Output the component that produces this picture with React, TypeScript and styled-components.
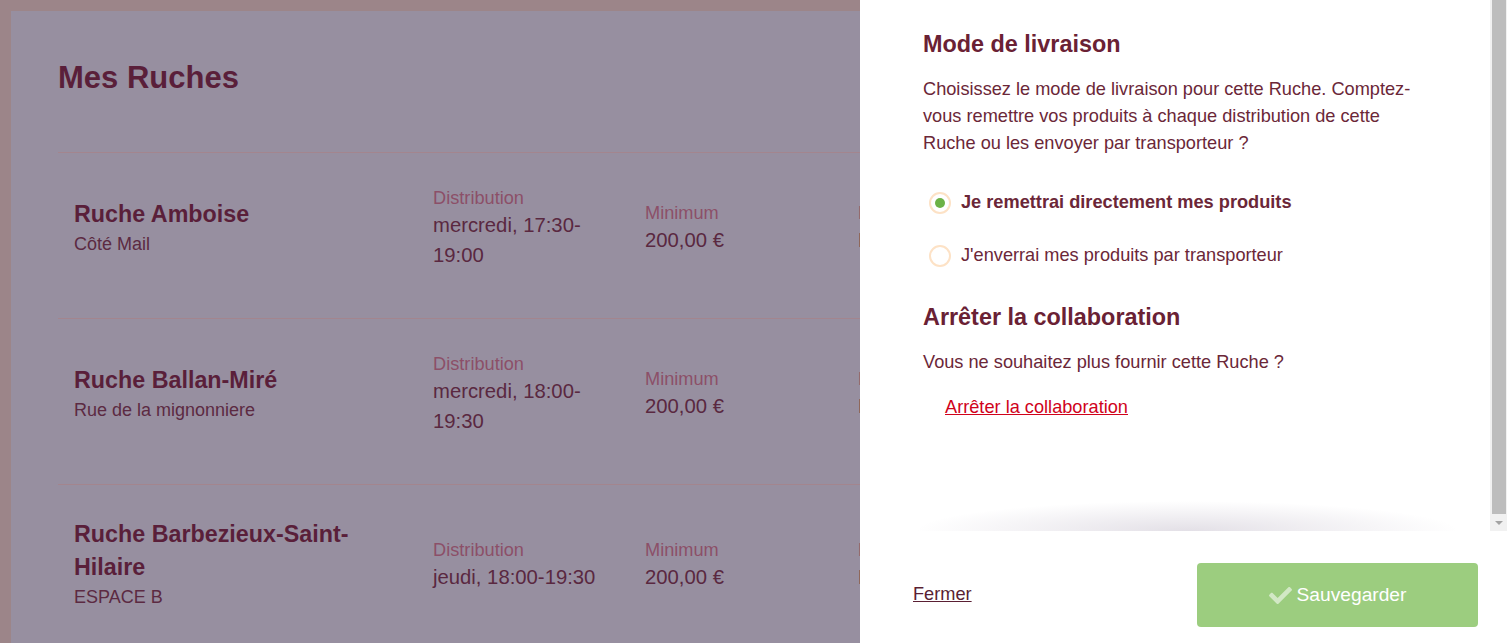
import React from "react"
import styled, { createGlobalStyle } from "styled-components"
import { FaCheck } from "react-icons/fa"

const GlobalStyle = createGlobalStyle`
  html, body {
    margin: 0;
    padding: 0;
    height: 100%;
    overflow: hidden;
  }
  body {
    background: #9c8589;
    font-family: "Liberation Sans", Arial, sans-serif;
  }
`

const ruches = [
  {
    name: "Ruche Amboise",
    place: "Côté Mail",
    distribution: "mercredi, 17:30-19:00",
    minimum: "200,00 €",
  },
  {
    name: "Ruche Ballan-Miré",
    place: "Rue de la mignonniere",
    distribution: "mercredi, 18:00-19:30",
    minimum: "200,00 €",
  },
  {
    name: "Ruche Barbezieux-Saint-Hilaire",
    place: "ESPACE B",
    distribution: "jeudi, 18:00-19:30",
    minimum: "200,00 €",
  },
]

const Page = styled.div`
  padding: 11px 11px 0;
  height: 100vh;
  box-sizing: border-box;
  overflow: hidden;
`

const Card = styled.section`
  background: #978fa0;
  padding: 49px 47px 0;
  min-height: 100%;
  box-sizing: border-box;
`

const Title = styled.h1`
  margin: 0 0 56px;
  font-size: 31px;
  line-height: 36px;
  font-weight: 700;
  color: #5a1f3a;
`

const Row = styled.div`
  display: grid;
  grid-template-columns: 359px 212px 213px 1fr;
  align-items: center;
  border-top: 1px solid #a3858e;
  padding: 33px 0 48px 16px;
`

const NameCol = styled.div`
  padding-right: 40px;
`

const Name = styled.div`
  font-size: 23.3px;
  line-height: 33px;
  font-weight: 700;
  color: #5a1f3a;
`

const Place = styled.div`
  font-size: 18px;
  line-height: 27px;
  color: #5c2a42;
`

const InfoCol = styled.div`
  padding-right: 28px;
`

const Label = styled.div`
  font-size: 18.2px;
  line-height: 24px;
  color: #8c4f68;
`

const Value = styled.div`
  font-size: 20.3px;
  line-height: 30px;
  color: #5a2840;
`

const Drawer = styled.aside`
  position: fixed;
  top: 0;
  right: 0;
  bottom: 0;
  width: 649px;
  background: #fff;
  display: flex;
  flex-direction: column;
`

const ScrollArea = styled.div`
  position: relative;
  height: 531px;
  display: flex;
  &::after {
    content: "";
    position: absolute;
    left: 55px;
    right: 50px;
    bottom: 0;
    height: 30px;
    background: radial-gradient(
      ellipse 50% 100% at 50% 100%,
      rgba(90, 70, 110, 0.17),
      rgba(90, 70, 110, 0) 100%
    );
    pointer-events: none;
  }
`

const Content = styled.div`
  flex: 1;
  padding: 29px 0 0 63px;
  color: #6b2738;
`

const Heading = styled.h2`
  margin: 0;
  font-size: 23.4px;
  line-height: 30px;
  font-weight: 700;
  color: #6a2134;
`

const Text = styled.p`
  margin: 17px 0 0;
  max-width: 500px;
  font-size: 18.2px;
  line-height: 27px;
`

const Options = styled.div`
  display: flex;
  flex-direction: column;
  gap: 26px;
  margin: 32px 0 33px 6px;
`

const Option = styled.label<{ $checked?: boolean }>`
  display: flex;
  align-items: center;
  gap: 10px;
  font-size: 18.2px;
  line-height: 27px;
  font-weight: ${p => (p.$checked ? 700 : 400)};
  color: #6b2738;
`

const Radio = styled.span<{ $checked?: boolean }>`
  width: 22px;
  height: 22px;
  box-sizing: border-box;
  border-radius: 50%;
  border: 2px solid #fde2c6;
  display: flex;
  align-items: center;
  justify-content: center;
  &::before {
    content: "";
    width: 10px;
    height: 10px;
    border-radius: 50%;
    background: ${p => (p.$checked ? "#6cb247" : "transparent")};
  }
`

const StopLink = styled.a`
  display: inline-block;
  margin: 18px 0 0 22px;
  font-size: 18.2px;
  line-height: 27px;
  color: #d0021b;
  text-decoration: underline;
`

const Scrollbar = styled.div`
  width: 17px;
  margin-right: 2px;
  background: #f1f1f1;
  display: flex;
  flex-direction: column;
`

const Thumb = styled.div`
  flex: 1;
  margin: 0 1px 0 2px;
  background: #bdbdbd;
`

const ArrowDown = styled.div`
  height: 17px;
  display: flex;
  align-items: center;
  justify-content: center;
  &::before {
    content: "";
    border-left: 4px solid transparent;
    border-right: 4px solid transparent;
    border-top: 4px solid #a3a3a3;
  }
`

const Footer = styled.footer`
  flex: 1;
  display: flex;
  align-items: center;
  justify-content: space-between;
  padding: 32px 31px 16px 53px;
`

const CloseLink = styled.a`
  margin-top: -2px;
  font-size: 18.2px;
  line-height: 27px;
  color: #5a1f33;
  text-decoration: underline;
`

const SaveButton = styled.button`
  width: 281px;
  height: 64px;
  border: none;
  border-radius: 4px;
  background: #9ccd7f;
  color: #fff;
  font-family: inherit;
  font-size: 19.2px;
  display: flex;
  align-items: center;
  justify-content: center;
  gap: 5px;
  svg {
    color: rgba(255, 255, 255, 0.55);
    font-size: 23px;
  }
`

export default function App() {
  return (
    <>
      <GlobalStyle />
      <Page>
        <Card>
          <Title>Mes Ruches</Title>
          {ruches.map(r => (
            <Row key={r.name}>
              <NameCol>
                <Name>{r.name}</Name>
                <Place>{r.place}</Place>
              </NameCol>
              <InfoCol>
                <Label>Distribution</Label>
                <Value>{r.distribution}</Value>
              </InfoCol>
              <InfoCol>
                <Label>Minimum</Label>
                <Value>{r.minimum}</Value>
              </InfoCol>
              <InfoCol>
                <Label>Livraison</Label>
                <Value>Directe</Value>
              </InfoCol>
            </Row>
          ))}
        </Card>
      </Page>

      <Drawer>
        <ScrollArea>
          <Content>
            <Heading>Mode de livraison</Heading>
            <Text>
              Choisissez le mode de livraison pour cette Ruche. Comptez-vous
              remettre vos produits à chaque distribution de cette Ruche ou les
              envoyer par transporteur ?
            </Text>
            <Options>
              <Option $checked>
                <Radio $checked />
                Je remettrai directement mes produits
              </Option>
              <Option>
                <Radio />
                J'enverrai mes produits par transporteur
              </Option>
            </Options>
            <Heading>Arrêter la collaboration</Heading>
            <Text>Vous ne souhaitez plus fournir cette Ruche ?</Text>
            <StopLink href="#">Arrêter la collaboration</StopLink>
          </Content>
          <Scrollbar>
            <Thumb />
            <ArrowDown />
          </Scrollbar>
        </ScrollArea>
        <Footer>
          <CloseLink href="#">Fermer</CloseLink>
          <SaveButton disabled>
            <FaCheck />
            Sauvegarder
          </SaveButton>
        </Footer>
      </Drawer>
    </>
  )
}
